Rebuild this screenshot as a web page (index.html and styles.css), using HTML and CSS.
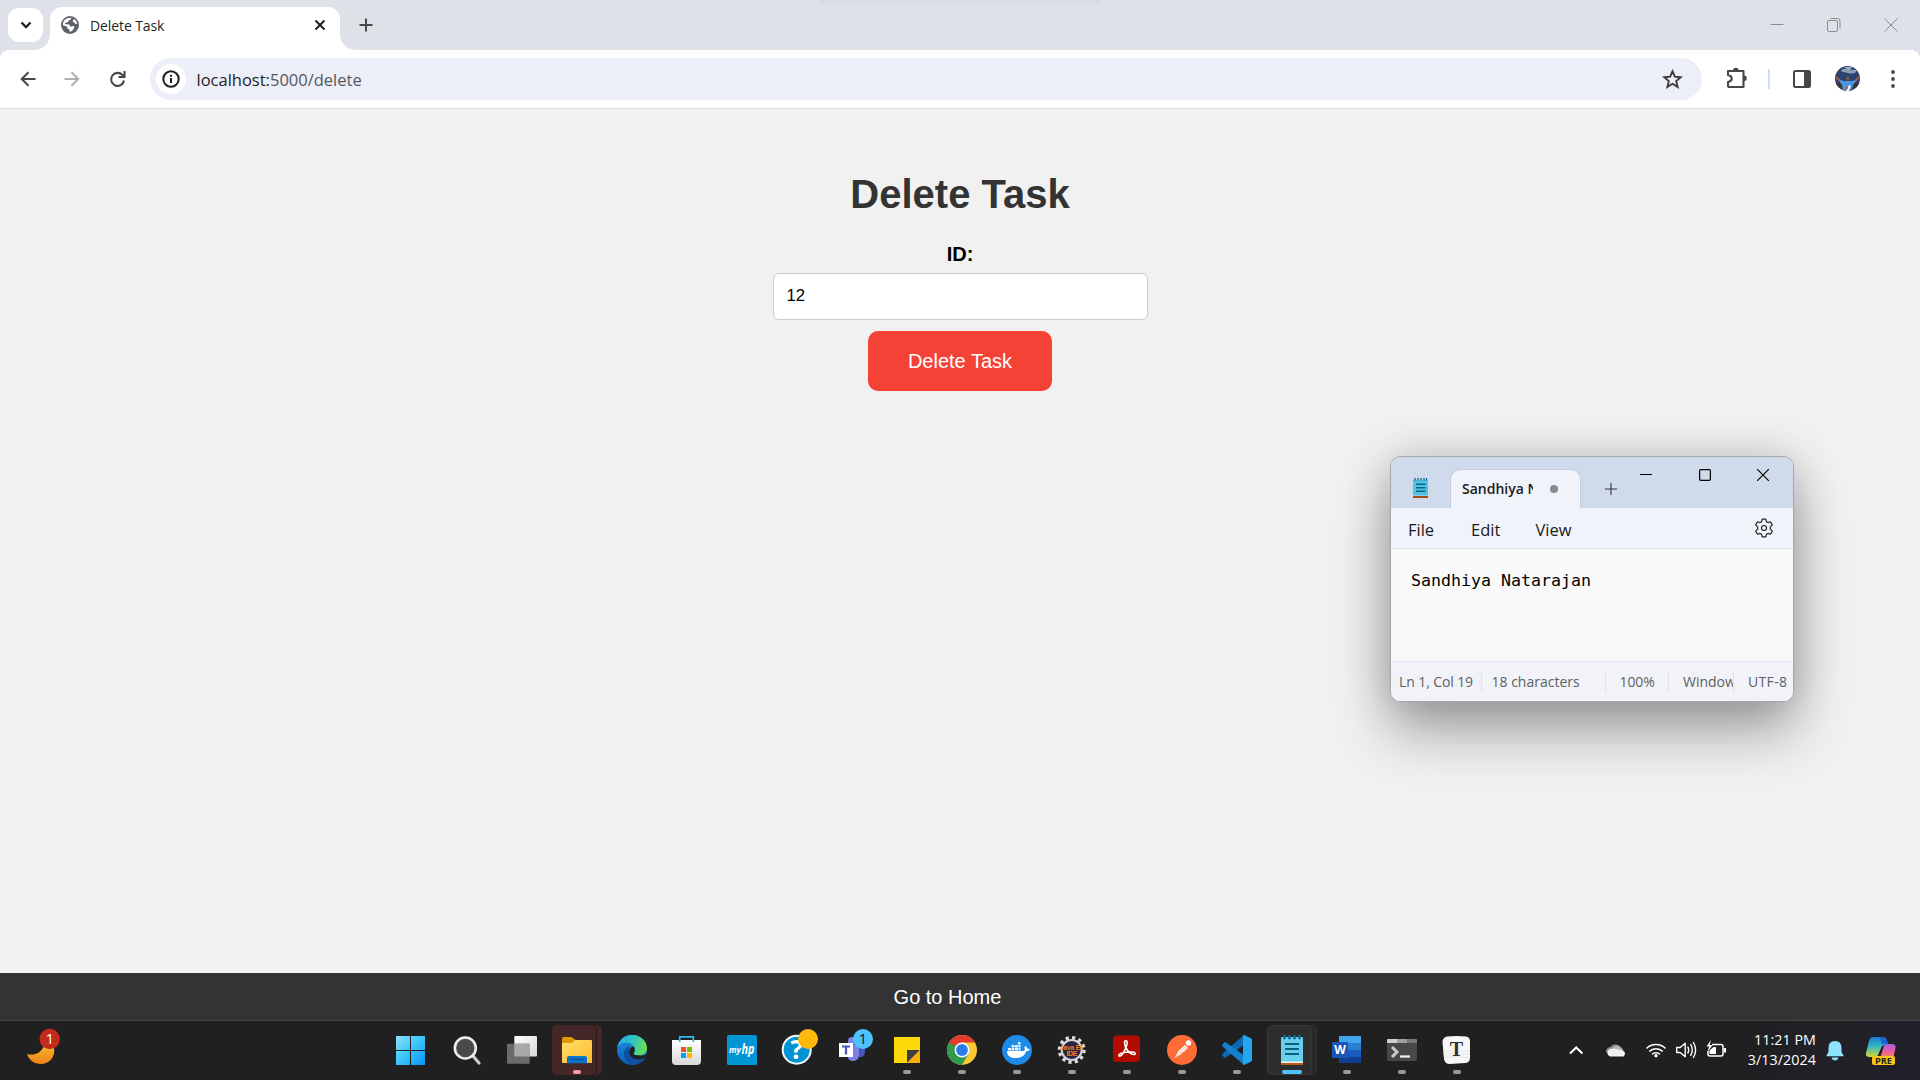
FILE: index.html
```
<!DOCTYPE html>
<html lang="en">
<head>
<meta charset="utf-8">
<title>Delete Task</title>
<link rel="stylesheet" href="styles.css">
</head>
<body>
<div class="desktop">
  <header class="tabstrip">
    <button class="tab-search" aria-label="Search tabs"><svg width="12" height="8" viewBox="0 0 12 8"><path d="M1.500 1.500 6 6l4.500-4.500" fill="none" stroke="#1f1f1f" stroke-width="2.300"/></svg></button>
    <div class="tab">
      <svg class="tab-icon" width="18" height="18" viewBox="0 0 18 18"><circle cx="9" cy="9" r="9" fill="#5f6368"/><path d="M10.500 1.800c-1 1.500-.6 2.400-2.600 2.700-.9.200-.4 1.700-1.500 2-1 .3-1.300-.3-2.200.4-.4.500-.3 1.300.4 1.400 1.600.100 3-.3 4 .8.600.9 0 1.600 1.400 1.500 1.500 0 1.700-.9 2.700-.5 1 .4.800 1.400.2 2.300-1.200 1.900-2.500 3-4.300 3.700-.3-1.200.5-1.800-.4-2.700-.8-.8-1.900-.6-1.900-1.900 0-1.500-2.300-1.700-4.300-2.300C1.400 5 4.900 1.400 10.500 1.800zM12.700 3c1.900 1 3.200 2.600 3.500 5-1.200.3-1.900-.4-2.400-1.100-.6-.7-1.800-.5-2-1.500-.1-1 .9-1.200.9-2.400z" fill="#fff"/></svg>
      <span class="tab-title">Delete Task</span>
      <svg class="tab-close" width="12" height="12" viewBox="0 0 12 12"><path d="M1.500 1.500l9 9M10.500 1.500l-9 9" stroke="#1f1f1f" stroke-width="2"/></svg>
    </div>
    <svg class="new-tab" width="14" height="14" viewBox="0 0 14 14"><path d="M7 .5v13M.5 7h13" stroke="#474747" stroke-width="2"/></svg>
    <div class="caption">
      <svg width="14" height="14" viewBox="0 0 14 14"><path d="M.5 6.500h13" stroke="#8a8c90"/></svg>
      <svg width="14" height="14" viewBox="0 0 14 14"><rect x=".5" y="2.500" width="10" height="11" rx="1.500" fill="none" stroke="#8a8c90"/><path d="M3.500.5h7a2.500 2.500 0 0 1 2.500 2.500v7.500" fill="none" stroke="#8a8c90"/></svg>
      <svg width="14" height="14" viewBox="0 0 14 14"><path d="M.5.500l13 13M13.500.5l-13 13" stroke="#8a8c90"/></svg>
    </div>
  </header>
  <div class="toolbar">
    <div class="nav">
      <svg width="16" height="16" viewBox="0 0 16 16"><path d="M15.500 8H2M8.500 1.200 1.700 8l6.800 6.800" fill="none" stroke="#474747" stroke-width="2"/></svg>
      <svg width="16" height="16" viewBox="0 0 16 16"><path d="M.5 8H14M7.500 1.200 14.300 8l-6.800 6.800" fill="none" stroke="#b0b0b0" stroke-width="2"/></svg>
      <svg width="17" height="17" viewBox="0 0 17 17"><path d="M15 9.500A6.500 6.500 0 1 1 13.300 3.900L15 5.600M9.500 6H15.500V0" fill="none" stroke="#474747" stroke-width="2.100"/></svg>
    </div>
    <div class="omnibox">
      <span class="site-info"><svg width="18" height="18" viewBox="0 0 18 18"><circle cx="9" cy="9" r="7.700" fill="none" stroke="#1f1f1f" stroke-width="2"/><path d="M9 8v5M9 4.700v2" stroke="#1f1f1f" stroke-width="2"/></svg></span>
      <span class="url">localhost:<span class="url-rest">5000/delete</span></span>
      <svg class="star" width="21" height="20" viewBox="0 0 21 20"><path d="M10.500 2.200l2.300 5.500 5.900.5-4.500 3.900 1.400 5.800-5.100-3.100-5.100 3.100 1.400-5.800-4.500-3.900 5.900-.5z" fill="none" stroke="#3c3c3c" stroke-width="1.900"/></svg>
    </div>
    <div class="actions">
      <svg class="puzzle" width="22" height="22" viewBox="0 0 22 22"><path d="M2 4h15.500v16H3.500a1.500 1.500 0 0 1-1.500-1.500V15c5-1 5-6 0-7z" fill="none" stroke="#474747" stroke-width="2.100" stroke-linejoin="round"/><path d="M7 3.500a2.800 2.800 0 0 1 5.600 0zM18 8.500a2.800 2.800 0 0 1 0 5.600z" fill="#474747"/></svg>
      <span class="divider"></span>
      <svg class="panel" width="18" height="18" viewBox="0 0 18 18"><rect x="1" y="1" width="16" height="16" rx="1.500" fill="#fff" stroke="#474747" stroke-width="2"/><path d="M11 1h6v16h-6z" fill="#474747"/></svg>
      <svg class="avatar" width="25" height="25" viewBox="0 0 25 25"><defs><clipPath id="av"><circle cx="12.500" cy="12.500" r="12.500"/></clipPath></defs><g clip-path="url(#av)"><path d="M0 0h25v25H0z" fill="#2a4370"/><path d="M0 17h25v8H0z" fill="#35353a"/><path d="M6 4q4-2 8-1t8 1l-2 3q-4 1-7 0T7 6z" fill="#8b9cb3"/><path d="M9 1h8l-3 3z" fill="#a6b5c6"/><path d="M3 13l6 2h8l6-2-5 6-1 6H8l-1-6z" fill="#4d93dc"/><path d="M1 11l4 4M24 11l-4 4" stroke="#a55e43" stroke-width="1.800"/><circle cx="12.800" cy="12.500" r="2" fill="#81513e"/><path d="M11 25l3-6 2 1-2 5z" fill="#f4f0e8"/><path d="M10 25l2-5 1 2z" fill="#d64335"/><path d="M15 24l2-4v4z" fill="#318650"/></g></svg>
      <svg class="kebab" width="4" height="18" viewBox="0 0 4 18"><g fill="#474747"><circle cx="2" cy="2" r="1.900"/><circle cx="2" cy="9" r="1.900"/><circle cx="2" cy="16" r="1.900"/></g></svg>
    </div>
  </div>
  <main class="page">
    <h1>Delete Task</h1>
    <form class="task-form">
      <label for="id">ID:</label>
      <input id="id" type="text" value="12">
      <button type="button">Delete Task</button>
    </form>
  </main>
  <footer class="site-footer"><a href="#">Go to Home</a></footer>

  <div class="taskbar">
    <div class="widgets">
      <svg width="70" height="60" viewBox="0 0 70 60"><defs><linearGradient id="moon" x2="0" y2="1"><stop offset="0" stop-color="#f7b928"/><stop offset="1" stop-color="#f0801f"/></linearGradient></defs><path d="M27 34c7 2 15-1 17-9h9c4 9-2 19-12 19-7 0-12-4-14-10z" fill="url(#moon)"/><circle cx="49.700" cy="19" r="10.200" fill="#c42b1c"/></svg>
      <span class="badge weather-badge">1</span>
    </div>
    <nav class="apps">
      <div class="app"><svg viewBox="0 0 55 60"><defs><linearGradient id="win" gradientUnits="userSpaceOnUse" x1="12" y1="16" x2="41" y2="45"><stop offset="0" stop-color="#8be0fd"/><stop offset=".45" stop-color="#41c8fa"/><stop offset="1" stop-color="#0793fb"/></linearGradient></defs><path d="M12 16h14v14H12zM27 16h14v14H27zM12 31h14v14H12zM27 31h14v14H27z" fill="url(#win)"/></svg></div>
      <div class="app"><svg viewBox="0 0 55 60"><path d="M34 36l6 7" stroke="#c9ccd1" stroke-width="3.200" stroke-linecap="round"/><circle cx="26.300" cy="28" r="10.500" fill="#4a4a4a" stroke="#eceef0" stroke-width="2.600"/></svg></div>
      <div class="app"><svg viewBox="0 0 55 60"><defs><linearGradient id="tv" x2="1" y2="1"><stop offset="0" stop-color="#fff"/><stop offset="1" stop-color="#d8d8d8"/></linearGradient></defs><rect x="20.300" y="16" width="22.700" height="20.500" rx="1" fill="url(#tv)"/><rect x="13" y="23.700" width="22.700" height="20" rx="1" fill="#6b6b6b"/><path d="M20.300 23.700h15.400v12.800H20.300z" fill="#a9a9a9"/></svg></div>
      <div class="app"><svg viewBox="0 0 55 60"><defs><linearGradient id="fold" x2="1" y2="1"><stop offset="0" stop-color="#ffe06b"/><stop offset="1" stop-color="#fdb92d"/></linearGradient></defs><rect x="3" y="5" width="50" height="50" rx="5" fill="#452729"/><path d="M43 5q4 0 4.500 5v40q0 4-4 5" fill="none" stroke="#2b1c1d" stroke-width="1.200"/><path d="M13 18.500q0-1.500 1.500-1.500h8l4 3v5H13z" fill="#dc9a02"/><path d="M13 23h10l3-3h16q1 0 1 1v22H13z" fill="url(#fold)"/><path d="M18 43.300V38q0-2 2-2h16q2 0 2 2v5.300z" fill="#0b74c8"/><path d="M21 39.500h14" stroke="#0c4f9d" stroke-width="1.200"/><rect x="24" y="50" width="8" height="4" rx="2" fill="#ff99a4"/></svg></div>
      <div class="app"><svg viewBox="0 0 55 60"><defs><linearGradient id="e1" x1="0" y1=".3" x2="1" y2=".5"><stop offset="0" stop-color="#2aa8e6"/><stop offset=".5" stop-color="#2fc6c4"/><stop offset="1" stop-color="#6be04a"/></linearGradient><linearGradient id="e2" x2="0" y2="1"><stop offset="0" stop-color="#1c8fdd"/><stop offset="1" stop-color="#0a62bb"/></linearGradient></defs><circle cx="28" cy="30" r="15" fill="url(#e2)"/><path d="M13.200 28C14.500 19.500 21 15 28 15c9 0 15 6.500 15 13 0 5-4 7.500-8 7.500-3.500 0-5.500-1-5.500-2 0-.8 1.300-1.500 1.300-4 0-3.500-4-7-8.800-7-5 0-8.400 3.500-8.800 5.500z" fill="url(#e1)"/><path d="M25 26c-3 1.200-5 4.500-5 8 0 6 4 10 8 11 5.500 0 10.500-2.500 13-6.500.3-.6-.2-1-.8-.7C34 41 25.500 38 25 31z" fill="#0f509f"/><path d="M29.600 26.500c-3 .5-4.800 3-4.400 6 .6 4 4.800 6.800 9.300 6.800 2.800 0 5-.7 6.400-1.600l2-3.700c-2.500 1.400-5 1.700-7.900 1.500-3.500 0-5.500-1-5.500-2 0-.8 1.300-1.500 1.300-4 0-1-.4-2.200-1.200-3z" fill="#202020"/></svg></div>
      <div class="app"><svg viewBox="0 0 55 60"><defs><linearGradient id="st" x2="0" y2="1"><stop offset="0" stop-color="#fff"/><stop offset="1" stop-color="#d9d9d9"/></linearGradient></defs><path d="M13 20h29v21q0 4-4 4H17q-4 0-4-4z" fill="url(#st)"/><path d="M20.700 22v-5.200h13.600V22" fill="none" stroke="#2bbdee" stroke-width="1.700"/><path d="M22 27h5v5h-5z" fill="#f25022"/><path d="M28 27h5v5h-5z" fill="#7fba00"/><path d="M22 33h5v5h-5z" fill="#00a4ef"/><path d="M28 33h5v5h-5z" fill="#ffb900"/></svg></div>
      <div class="app"><svg viewBox="0 0 55 60"><rect x="13" y="15" width="30" height="30" rx="1.500" fill="#0096d6"/><text x="15" y="33" class="hp-my" textLength="12" lengthAdjust="spacingAndGlyphs">my</text><text x="27.500" y="34" class="hp-logo" textLength="13" lengthAdjust="spacingAndGlyphs">hp</text></svg></div>
      <div class="app"><svg viewBox="0 0 55 60"><circle cx="27.700" cy="29.700" r="14" fill="#0093d4" stroke="#f3f8fb" stroke-width="2"/><text x="27.700" y="39" class="help-mark" text-anchor="middle">?</text><circle cx="39" cy="19" r="10" fill="#ffb90d"/></svg></div>
      <div class="app"><svg viewBox="0 0 55 60"><path d="M34 26h7v6q0 5-6 5.500z" fill="#4b53bc"/><path d="M24 25h11v9q0 7-6 7-4 0-5.500-4z" fill="#7b83eb"/><circle cx="28" cy="21" r="4" fill="#7b83eb"/><rect x="15" y="23" width="14" height="14" fill="#fff"/><path d="M18 26.500h8M22 26v8.500" stroke="#4b53bc" stroke-width="2.200"/><circle cx="39" cy="19" r="10" fill="#4cc2ff"/></svg><span class="badge teams-badge">1</span></div>
      <div class="app"><svg viewBox="0 0 55 60"><path d="M15 17h26v26H15z" fill="#fed90a"/><path d="M28 43V30h13z" fill="#3d3f43"/><path d="M28 43l13-13v13z" fill="#fbae08"/><rect x="24" y="50" width="8" height="4" rx="2" class="pill"/></svg></div>
      <div class="app"><svg viewBox="0 0 55 60"><circle cx="28" cy="30" r="15" fill="#fcc934"/><path d="M28 30L15 22.500A15 15 0 0 0 28 45l6.500-11.200z" fill="#2f9c4c"/><path d="M15 22.500A15 15 0 0 1 41 22.500H28l-6.500 11.300z" fill="#e33b2e"/><path d="M15 22.500l6.500 11.300L28 30z" fill="#2f9c4c"/><circle cx="28" cy="30" r="7.500" fill="#fff"/><circle cx="28" cy="30" r="5.900" fill="#2a7de9"/><rect x="24" y="50" width="8" height="4" rx="2" class="pill"/></svg></div>
      <div class="app"><svg viewBox="0 0 55 60"><circle cx="28" cy="30" r="15" fill="#1d8ce9"/><path d="M18 31h16.500c1.500-.3 1.500-2.500 1-4l1-1c1.200.8 1.700 1.800 1.700 2.700 1-.2 1.800 0 2.600.5-.6 1.500-2 2-3.500 2C35.500 36 32 38 26.500 38c-5.500 0-8.500-2.500-8.500-7z" fill="#fff"/><path d="M19 28h3v2.500h-3zM22.500 28h3v2.500h-3zM26 28h3v2.500h-3zM29.500 28h2v2.500h-2zM22.500 25h3v2.500h-3zM26 25h3v2.500h-3zM29.500 25h2v2.500h-2zM29 22h2.500v2.500H29z" fill="#e6f2fc"/><rect x="24" y="50" width="8" height="4" rx="2" class="pill"/></svg></div>
      <div class="app"><svg viewBox="0 0 55 60"><circle cx="27.700" cy="30" r="12.300" fill="none" stroke="#dcdcdc" stroke-width="3.400" stroke-dasharray="3.220 3.220"/><circle cx="27.700" cy="30" r="10" fill="#292443" stroke="#d5d5d5" stroke-width="2"/><text x="16" y="29.500" class="ide" textLength="24" lengthAdjust="spacingAndGlyphs">Java EE</text><text x="22.500" y="35.500" class="ide" textLength="11">IDE</text><rect x="24" y="50" width="8" height="4" rx="2" class="pill"/></svg></div>
      <div class="app"><svg viewBox="0 0 55 60"><rect x="14" y="15.500" width="27" height="26.500" rx="4" fill="#b30b00"/><path d="M20 36c-1.500-2 5-4.500 14-4 3 .3 3 2.500 1 2.500-4 0-9.500-6-9.500-12 0-2.500 3-2.500 2.700.5-.4 5-6 15-8.200 13z" fill="none" stroke="#fff" stroke-width="1.600"/><rect x="24" y="50" width="8" height="4" rx="2" class="pill"/></svg></div>
      <div class="app"><svg viewBox="0 0 55 60"><circle cx="28" cy="30" r="15" fill="#ff6c37"/><path d="M20 38.500l5-8 6-5.500 3 3-7 6z" fill="#fff"/><circle cx="34.500" cy="23" r="2.700" fill="#fff"/><path d="M20.500 38l11-11M27 33l3-1 3-4" fill="none" stroke="#f5a284" stroke-width=".8"/><rect x="24" y="50" width="8" height="4" rx="2" class="pill"/></svg></div>
      <div class="app"><svg viewBox="0 0 55 60"><path d="M13.500 35.500q-1-1 0-2L35 15l1 9-19 13.500q-1 .5-2 0z" fill="#0b6ab4"/><path d="M13.500 24.500q-1 1 0 2L35 45l1-9-19-13.500q-1-.5-2 0z" fill="#1280cd"/><path d="M35 15l7 3.200q1 .6 1 1.800v20q0 1.200-1 1.800L35 45q-1 0-1-1V16q0-1 1-1z" fill="#25a5ef"/><rect x="24" y="50" width="8" height="4" rx="2" class="pill"/></svg></div>
      <div class="app"><svg viewBox="0 0 55 60"><rect x="5" y="5.500" width="47.500" height="49" rx="5" fill="#282828" stroke="#353535"/><rect x="3.500" y="5.500" width="43.500" height="49" rx="5" fill="#2d2d2d" stroke="#3b3b3b"/><path d="M17 41h22v4H17z" fill="#b25b1d"/><path d="M17 41h22v2H17z" fill="#f4efe8"/><rect x="17" y="17" width="22" height="24.500" rx="1" fill="#67cfec"/><path d="M21 24h14M21 29h14M21 34h14" stroke="#075f85" stroke-width="1.800"/><path d="M20.500 16.500v1.500M25.500 16.500v1.500M30.500 16.500v1.500M35.500 16.500v1.500" stroke="#0b6f93" stroke-width="2.800" stroke-linecap="round"/><rect x="18" y="50" width="20" height="4" rx="2" fill="#4cc2ff"/></svg></div>
      <div class="app"><svg viewBox="0 0 55 60"><path d="M20 16h22v7H20z" fill="#41a5ee"/><path d="M20 23h22v7H20z" fill="#2b7cd3"/><path d="M20 30h22v7H20z" fill="#185abd"/><path d="M20 37h22v6H20z" fill="#103f91"/><rect x="13" y="22" width="16" height="16" rx="1" fill="#1b55b8"/><text x="21" y="34.200" class="word-w" text-anchor="middle">W</text><rect x="24" y="50" width="8" height="4" rx="2" class="pill"/></svg></div>
      <div class="app"><svg viewBox="0 0 55 60"><rect x="13" y="19" width="30" height="22" rx="1.500" fill="#484848"/><path d="M13 23v-3q0-1 1-1h9v4z" fill="#d0d0d0"/><path d="M23 19h10v4H23z" fill="#a0a0a0"/><path d="M33 19h9q1 0 1 1v3H33z" fill="#777"/><path d="M18 27l5 5-5 5" fill="none" stroke="#ccc" stroke-width="3"/><path d="M26 36.500h10" stroke="#f2f2f2" stroke-width="2.200"/><rect x="24" y="50" width="8" height="4" rx="2" class="pill"/></svg></div>
      <div class="app"><svg viewBox="0 0 55 60"><path d="M18 16.500q10-.8 19 0 4 .5 4 5v16q0 5-4.500 5.500l-16 1q-4.500 0-5.500-5L13.500 22q0-4.500 4.500-5.500z" fill="#f7f7f7"/><path d="M14 31h27M14 34h27M15 37h26" stroke="#e2e2e2" stroke-width=".8"/><text x="27.500" y="36.300" class="serif-t" text-anchor="middle">T</text><rect x="24" y="50" width="8" height="4" rx="2" class="pill"/></svg></div>
    </nav>
    <div class="tray">
      <svg width="52" height="60" viewBox="1550 0 52 60"><path d="M1570 33.500l6.200-6 6.200 6" fill="none" stroke="#fff" stroke-width="2"/></svg>
      <svg width="36" height="60" viewBox="1602 0 36 60"><path d="M1606 32a5 5 0 0 1 4.500-5 6 6 0 0 1 10.500 1.500l2 4-14 2z" fill="#8f8f8f"/><path d="M1613 27.500q4-3 7.500-.5l3 3-6 2z" fill="#b5b5b5"/><path d="M1610 36.500a4 4 0 0 1 0-7.500l4-.5 9 2a3.500 3.500 0 0 1 .5 6z" fill="#f2f2f2"/></svg>
      <svg width="32" height="60" viewBox="1638 0 32 60"><g fill="none" stroke="#fff" stroke-width="1.500"><path d="M1646.500 28.500a13.500 13.500 0 0 1 19 0"/><path d="M1649.200 31.500a9.700 9.700 0 0 1 13.600 0"/><path d="M1652 34.300a5.800 5.800 0 0 1 8 0"/></g><circle cx="1656" cy="35.800" r="1.700" fill="#fff"/></svg>
      <svg width="32" height="60" viewBox="1670 0 32 60"><g fill="none" stroke="#fff" stroke-width="1.400"><path d="M1676.700 27.500h3.500l5-4.300v13.600l-5-4.300h-3.500z" stroke-linejoin="round"/><path d="M1687.700 26.500q2 3.500 0 7M1690.500 24q3.500 6 0 12M1693.200 22q4.800 8 0 16"/></g></svg>
      <svg width="38" height="60" viewBox="1702 0 38 60"><path d="M1712 24.500h9q2 0 2 2v7.500q0 2-2 2h-11q-2 0-2-2V31" fill="none" stroke="#fff" stroke-width="1.500"/><path d="M1724 28h2v4.500h-2z" fill="#fff"/><path d="M1716 27v7h-6.500v-3.500l4-3.500z" fill="#fff"/><path d="M1711 20l-4.500 6.500h2.700l-1.700 5.500 5.200-7h-3z" fill="#fff"/></svg>
      <div class="clock"><span class="time">11:21 PM</span><span class="date">3/13/2024</span></div>
      <svg width="38" height="60" viewBox="1817 0 38 60"><path d="M1835 21q6.500 0 6.500 7v4l2 3.500v.8h-17v-.8l2-3.500v-4q0-7 6.500-7z" fill="#8fe3fd"/><path d="M1831.500 37.500h7q-.8 3-3.500 3t-3.500-3z" fill="#8fe3fd"/></svg>
      <svg width="65" height="60" viewBox="1857 0 65 60"><defs><linearGradient id="c1" x2="0" y2="1"><stop offset="0" stop-color="#1d78d8"/><stop offset=".45" stop-color="#2fb7c4"/><stop offset="1" stop-color="#d8d431"/></linearGradient><linearGradient id="c2" x2="0" y2="1"><stop offset="0" stop-color="#a95be8"/><stop offset=".6" stop-color="#ee5f9d"/><stop offset="1" stop-color="#fb8058"/></linearGradient></defs><path d="M1875 17h10q3 0 4 4l1 3-6 2-4 9q-1 2-3 2h-5q-5 0-4-4l3-12q1-4 4-4z" fill="url(#c1)"/><path d="M1880 17h5q3 0 4 4l1 3h-6q-2-7-4-7z" fill="#1e63d6"/><path d="M1889 24h5q4 0 3.500 4l-2 9h-13l3-10q1-3 3.500-3z" fill="url(#c2)"/><rect x="1874" y="36" width="23" height="9" rx="2" fill="#fcc419"/><text x="1877" y="43.500" class="pre" textLength="17" lengthAdjust="spacingAndGlyphs">PRE</text></svg>
    </div>
  </div>

  <section class="notepad">
    <div class="np-title">
      <svg class="np-icon" width="15" height="20" viewBox="0 0 15 20"><path d="M0 18h15v2H0z" fill="#a2500f"/><path d="M0 2h15v15.500H0z" fill="#4fc3e3"/><path d="M3 6.300h9.500M3 9.800h9.500M3 13.300h9.500" stroke="#09628a" stroke-width="1.500"/><path d="M2 0v2.500M5 0v2.500M8 0v2.500M11 0v2.500M13.500 0v2.500" stroke="#09628a" stroke-width="1.300"/></svg>
      <div class="np-tab"><span class="np-name">Sandhiya N</span><span class="np-dot"></span></div>
      <svg class="np-plus" width="12" height="12" viewBox="0 0 12 12"><path d="M6 0v12M0 6h12" stroke="#333" stroke-width="1.100"/></svg>
      <div class="np-caption">
        <svg width="12" height="12" viewBox="0 0 12 12"><path d="M0 5.500h12" stroke="#000"/></svg>
        <svg width="12" height="12" viewBox="0 0 12 12"><rect x=".6" y=".6" width="10.800" height="10.800" rx="1.300" fill="none" stroke="#000" stroke-width="1.200"/></svg>
        <svg width="12" height="12" viewBox="0 0 12 12"><path d="M0 0l12 12M12 0L0 12" stroke="#000" stroke-width="1.200"/></svg>
      </div>
    </div>
    <div class="np-menu">
      <span class="m-file">File</span><span class="m-edit">Edit</span><span class="m-view">View</span>
      <svg class="gear" width="20" height="20" viewBox="0 0 20 20"><path d="M8.200 1.200h3.600l.6 2.500 1.500.9 2.500-.8 1.900 3.100-1.900 1.900v2.400l1.900 1.900-1.900 3.100-2.500-.8-1.500.9-.6 2.500H8.200l-.6-2.500-1.500-.9-2.500.8-1.900-3.100 1.900-1.900V8.800L1.700 6.900l1.900-3.100 2.500.8 1.500-.9z" fill="none" stroke="#222" stroke-width="1.200" stroke-linejoin="round"/><circle cx="10" cy="10" r="2.500" fill="none" stroke="#222" stroke-width="1.200"/></svg>
    </div>
    <div class="np-text">Sandhiya Natarajan</div>
    <div class="np-status">
      <span class="s1">Ln 1, Col 19</span><span class="s2">18 characters</span><span class="s3">100%</span><span class="s4"><i>Window</i></span><span class="s5">UTF-8</span>
    </div>
  </section>
</div>
</body>
</html>
```
FILE: styles.css
```
* { box-sizing: border-box; }
body { margin: 0; overflow: hidden; font-family: "Open Sans", "Noto Sans", sans-serif; }
svg { display: block; flex: none; }
.desktop { position: relative; width: 1920px; height: 1080px; display: flex; flex-direction: column; background: #f1f1f1; }

/* Browser chrome */
.tabstrip { height: 50px; display: flex; background: linear-gradient(#d7dae2, transparent) 820px 0 / 280px 5px no-repeat, #dee1e8; padding-left: 8px; }
.tab-search { width: 35px; height: 34px; margin-top: 8px; padding: 0; border: 0; border-radius: 11px; background: #fff; display: flex; align-items: center; justify-content: center; }
.tab { position: relative; width: 290px; height: 43px; margin: 7px 0 0 7px; padding: 0 14px 7px 11px; border-radius: 12px 12px 0 0; background: #fff; display: flex; align-items: center; }
.tab::before, .tab::after { content: ""; position: absolute; bottom: 0; width: 15px; height: 15px; }
.tab::before { left: -15px; background: radial-gradient(circle at 0 0, transparent 14.500px, #fff 15px); }
.tab::after { right: -15px; background: radial-gradient(circle at 100% 0, transparent 14.500px, #fff 15px); }
.tab-title { flex: 1; margin-left: 11px; font-size: 14px; line-height: 20px; letter-spacing: -.1px; color: #1f1f1f; padding-top: 1px; }
.new-tab { margin: 18px 0 0 18.500px; }
.caption { margin-left: auto; display: flex; gap: 43px; padding: 18px 22px 0 0; }
.toolbar { height: 59px; display: flex; align-items: center; border-bottom: 1px solid #dcdcdc; background: radial-gradient(circle at 10px 10px, #fff 10px, #dee1e8 10.500px) 0 0 / 10px 10px no-repeat, radial-gradient(circle at 0 10px, #fff 10px, #dee1e8 10.500px) 100% 0 / 10px 10px no-repeat, #fff; }
.nav { width: 150px; display: flex; align-items: center; gap: 28.500px; padding-left: 19.500px; }
.omnibox { width: 1552px; height: 42px; border-radius: 21px; background: #eceef8; display: flex; align-items: center; padding: 0 19px 0 6px; }
.site-info { width: 30px; height: 30px; border-radius: 50%; background: #fff; display: flex; align-items: center; justify-content: center; }
.url { flex: 1; margin-left: 10.500px; font-size: 16.500px; line-height: 24px; color: #1f1f1f; padding-top: 1px; }
.url-rest { color: #55575b; }
.actions { flex: 1; display: flex; align-items: center; }
.puzzle { margin: -2px 0 0 23.500px; }
.divider { width: 2px; height: 20px; margin-left: 20.500px; background: #d0e0fa; }
.panel { margin-left: 23px; }
.avatar { margin: -1px 0 0 24px; }
.kebab { margin-left: 30.500px; }

/* Task page */
.page { flex: 1; display: flex; flex-direction: column; align-items: center; font-family: "Liberation Sans", Arial, sans-serif; }
.page h1 { margin: 61px 0 24px; font-size: 40px; line-height: 48px; color: #333; }
.task-form { display: flex; flex-direction: column; align-items: center; }
.task-form label { font-size: 20px; line-height: 24px; font-weight: bold; color: #000; }
.task-form input { width: 375px; height: 47px; margin: 7px 0 11px; padding: 0 13px 1px; border: 1px solid #ccc; border-radius: 6px; background: #fff; font: 16.670px "Liberation Sans", Arial, sans-serif; color: #000; }
.task-form button { width: 184px; height: 60px; border: 0; border-radius: 10px; background: #f44336; color: #fff; font: 20px "Liberation Sans", Arial, sans-serif; }
.site-footer { height: 47px; background: #333; display: flex; align-items: center; justify-content: center; padding-right: 25px; }
.site-footer a { color: #fff; text-decoration: none; font: 20px/24px "Liberation Sans", Arial, sans-serif; }

/* Taskbar */
.taskbar { height: 60px; display: flex; background: linear-gradient(90deg, #202020 88%, #20202a); box-shadow: inset 0 1px #444; }
.widgets { position: relative; width: 384px; }
.apps { display: flex; }
.app { position: relative; width: 55px; height: 60px; }
.app svg { width: 55px; height: 60px; }
.badge { position: absolute; width: 20px; text-align: center; font-size: 14.500px; line-height: 20px; top: 9px; }
.weather-badge { left: 40px; color: #fff; }
.teams-badge { left: 29px; color: #111; }
.pill { fill: #9a9a9a; }
.hp-my { font: italic bold 9px "Open Sans", sans-serif; fill: #fff; }
.hp-logo { font: italic bold 14px "Open Sans", sans-serif; fill: #fff; }
.help-mark { font: bold 26px "Open Sans", sans-serif; fill: #fff; }
.ide { font: bold 7px "Liberation Sans", sans-serif; fill: #f58220; }
.word-w { font: bold 12px "Open Sans", sans-serif; fill: #fff; }
.serif-t { font: bold 20px "Liberation Serif", serif; fill: #333; }
.pre { font: bold 8.500px "Open Sans", sans-serif; fill: #222; }
.tray { flex: 1; display: flex; padding-left: 66px; }
.clock { width: 77px; display: flex; flex-direction: column; align-items: flex-end; padding: 10px 1px 0 0; color: #fff; font-size: 14.300px; line-height: 20px; white-space: nowrap; }
.time, .date { letter-spacing: .05px; }

/* Notepad window */
.notepad { position: absolute; left: 1390px; top: 456px; width: 404px; height: 246px; border: 1px solid #a5a7aa; border-radius: 10px; overflow: hidden; background: #f9f9f9; box-shadow: 0 30px 55px rgba(0,0,0,.32), 0 0 45px rgba(0,0,0,.17); display: flex; flex-direction: column; }
.np-title { height: 51px; display: flex; background: #cfdbeb; }
.np-icon { margin: 21px 0 0 22px; }
.np-tab { width: 129px; height: 38px; margin: 13px 0 0 23px; padding: 0 22.500px 0 11px; border-radius: 9px 9px 0 0; background: #f0f3f9; box-shadow: 0 0 0 1px #c1cde0; display: flex; align-items: center; justify-content: space-between; }
.np-name { width: 71px; overflow: hidden; white-space: nowrap; font-size: 14px; font-weight: 600; line-height: 22px; color: #1b1b1b; }
.np-dot { width: 8px; height: 8px; border-radius: 50%; background: #87898d; }
.np-plus { margin: 26px 0 0 24.500px; }
.np-caption { display: flex; gap: 46.500px; margin: 12px 0 0 23.500px; }
.np-menu { height: 41px; display: flex; background: #f0f3f9; border-bottom: 1px solid #e1e4ea; font-size: 16.500px; line-height: 43px; color: #1b1b1b; }
.m-file { width: 63px; margin-left: 17px; }
.m-edit { width: 64.500px; }
.gear { margin: 10px 19px 0 auto; }
.np-text { flex: 1; padding: 19px 0 0 20px; font: 16.610px/26px "DejaVu Sans Mono", monospace; color: #000; }
.np-status { height: 40px; display: flex; align-items: center; background: #f1f3f9; border-top: 1px solid #e1e4ea; font-size: 14px; line-height: 20px; color: #5e5f62; white-space: nowrap; }
.np-status span { flex: none; }
.np-status i { display: block; font-style: normal; overflow: hidden; }
.s1, .s2, .s3, .s4 { border-right: 1px solid #dfe2e8; }
.s1 { width: 91px; padding-left: 8px; letter-spacing: -.1px; }
.s2 { width: 124px; padding-left: 9.500px; }
.s3 { width: 63px; padding-left: 13.500px; letter-spacing: -.1px; }
.s4 { width: 65px; padding-left: 14px; }
.s5 { padding-left: 14px; letter-spacing: .35px; }
```
